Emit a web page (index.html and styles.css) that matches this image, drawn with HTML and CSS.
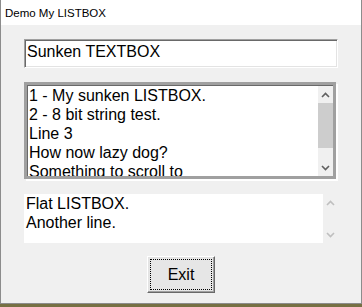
FILE: index.html
```html
<!DOCTYPE html>
<html>
	<head>
		<meta charset="utf-8">
		<title>Demo My LISTBOX</title>
		<link rel="stylesheet" href="styles.css">
	</head>
	<body>
	<div class="window">
		<div class="titlebar">Demo My LISTBOX</div>
		<div class="client">
			<div class="textbox">Sunken TEXTBOX</div>
			<div class="listbox">
				<ul class="items">
					<li>1 - My sunken LISTBOX.</li>
					<li>2 - 8 bit string test.</li>
					<li>Line 3</li>
					<li>How now lazy dog?</li>
					<li>Something to scroll to</li>
				</ul>
				<div class="scrollbar">
					<div class="arrow">
						<svg width="9" height="6" viewBox="0 0 9 6"><polyline points="1,5 4.5,1.5 8,5" fill="none" stroke="#606060" stroke-width="1.6"/></svg>
					</div>
					<div class="thumb"></div>
					<div class="track"></div>
					<div class="arrow">
						<svg width="9" height="6" viewBox="0 0 9 6"><polyline points="1,1 4.5,4.5 8,1" fill="none" stroke="#606060" stroke-width="1.6"/></svg>
					</div>
				</div>
			</div>
			<div class="flatbox">
				<ul class="items flat">
					<li>Flat LISTBOX.</li>
					<li>Another line.</li>
				</ul>
				<div class="scrollbar off">
					<div class="arrow">
						<svg width="9" height="6" viewBox="0 0 9 6"><polyline points="1,5 4.5,1.5 8,5" fill="none" stroke="#bfbfbf" stroke-width="1.6"/></svg>
					</div>
					<div class="track"></div>
					<div class="arrow">
						<svg width="9" height="6" viewBox="0 0 9 6"><polyline points="1,1 4.5,4.5 8,1" fill="none" stroke="#bfbfbf" stroke-width="1.6"/></svg>
					</div>
				</div>
			</div>
			<div class="buttons">
				<div class="button"><span class="focus">Exit</span></div>
			</div>
		</div>
	</div>
	</body>
</html>
```

FILE: styles.css
```css
* {margin: 0;padding: 0;box-sizing: border-box;}
li {list-style: none;}
body {
	background: #767043;
	width: 362px;
	height: 307px;
	overflow: hidden;
	font-family: "Liberation Sans", Arial, sans-serif;
}
.window {
	width: 362px;
	height: 304px;
	border-left: 1px solid #8c8c8c;
	border-right: 1px solid #8c8c8c;
	border-bottom: 1px solid #8c8c8c;
	background: #f0f0f0;
	display: flex;
	flex-direction: column;
}
.titlebar {
	height: 25px;
	background: #fff;
	font-size: 11.5px;
	line-height: 26px;
	padding-left: 4px;
	color: #000;
}
.client {
	flex: 1;
	padding: 14px 0 0 23px;
	display: flex;
	flex-direction: column;
	font-size: 16px;
	color: #000;
}
.textbox {
	width: 314px;
	height: 29px;
	background: #fff;
	border: 1px solid;
	border-color: #a0a0a0 #fff #fff #a0a0a0;
	box-shadow: inset 1px 1px 0 #696969, inset -1px -1px 0 #e3e3e3;
	padding-left: 2px;
	padding-top: 1px;
	line-height: 21px;
}
.listbox {
	margin-top: 14px;
	width: 312px;
	height: 97px;
	border: 3px solid #a0a0a0;
	background: #fff;
	box-shadow: inset 1px 1px 0 #696969, 2px 2px 0 #fff;
	display: flex;
	overflow: hidden;
}
.items {
	flex: 1;
	padding: 1px 0 0 2px;
	line-height: 19px;
	overflow: hidden;
	white-space: nowrap;
}
.scrollbar {
	width: 15px;
	background: #f0f0f0;
	display: flex;
	flex-direction: column;
	margin-top: 1px;
}
.arrow {
	height: 17px;
	display: flex;
	align-items: center;
	justify-content: center;
}
.thumb {
	height: 45px;
	background: #cdcdcd;
}
.track {
	flex: 1;
}
.flatbox {
	margin-top: 15px;
	width: 314px;
	height: 49px;
	display: flex;
}
.flat {
	background: #fff;
	padding: 0 0 0 2px;
}
.scrollbar.off {
	margin-top: 0;
	background: #f0f0f0;
}
.buttons {
	width: 314px;
	margin-top: 13px;
	display: flex;
	justify-content: center;
}
.button {
	width: 68px;
	height: 37px;
	background: #e6e6e6;
	border: 1px solid;
	border-color: #fff #696969 #696969 #fff;
	box-shadow: inset -1px -1px 0 #a0a0a0, inset 1px 1px 0 #e3e3e3;
	padding: 2px;
	display: flex;
}
.focus {
	flex: 1;
	border: 1px dotted #000;
	display: flex;
	align-items: center;
	justify-content: center;
	padding-top: 1px;
}
```
